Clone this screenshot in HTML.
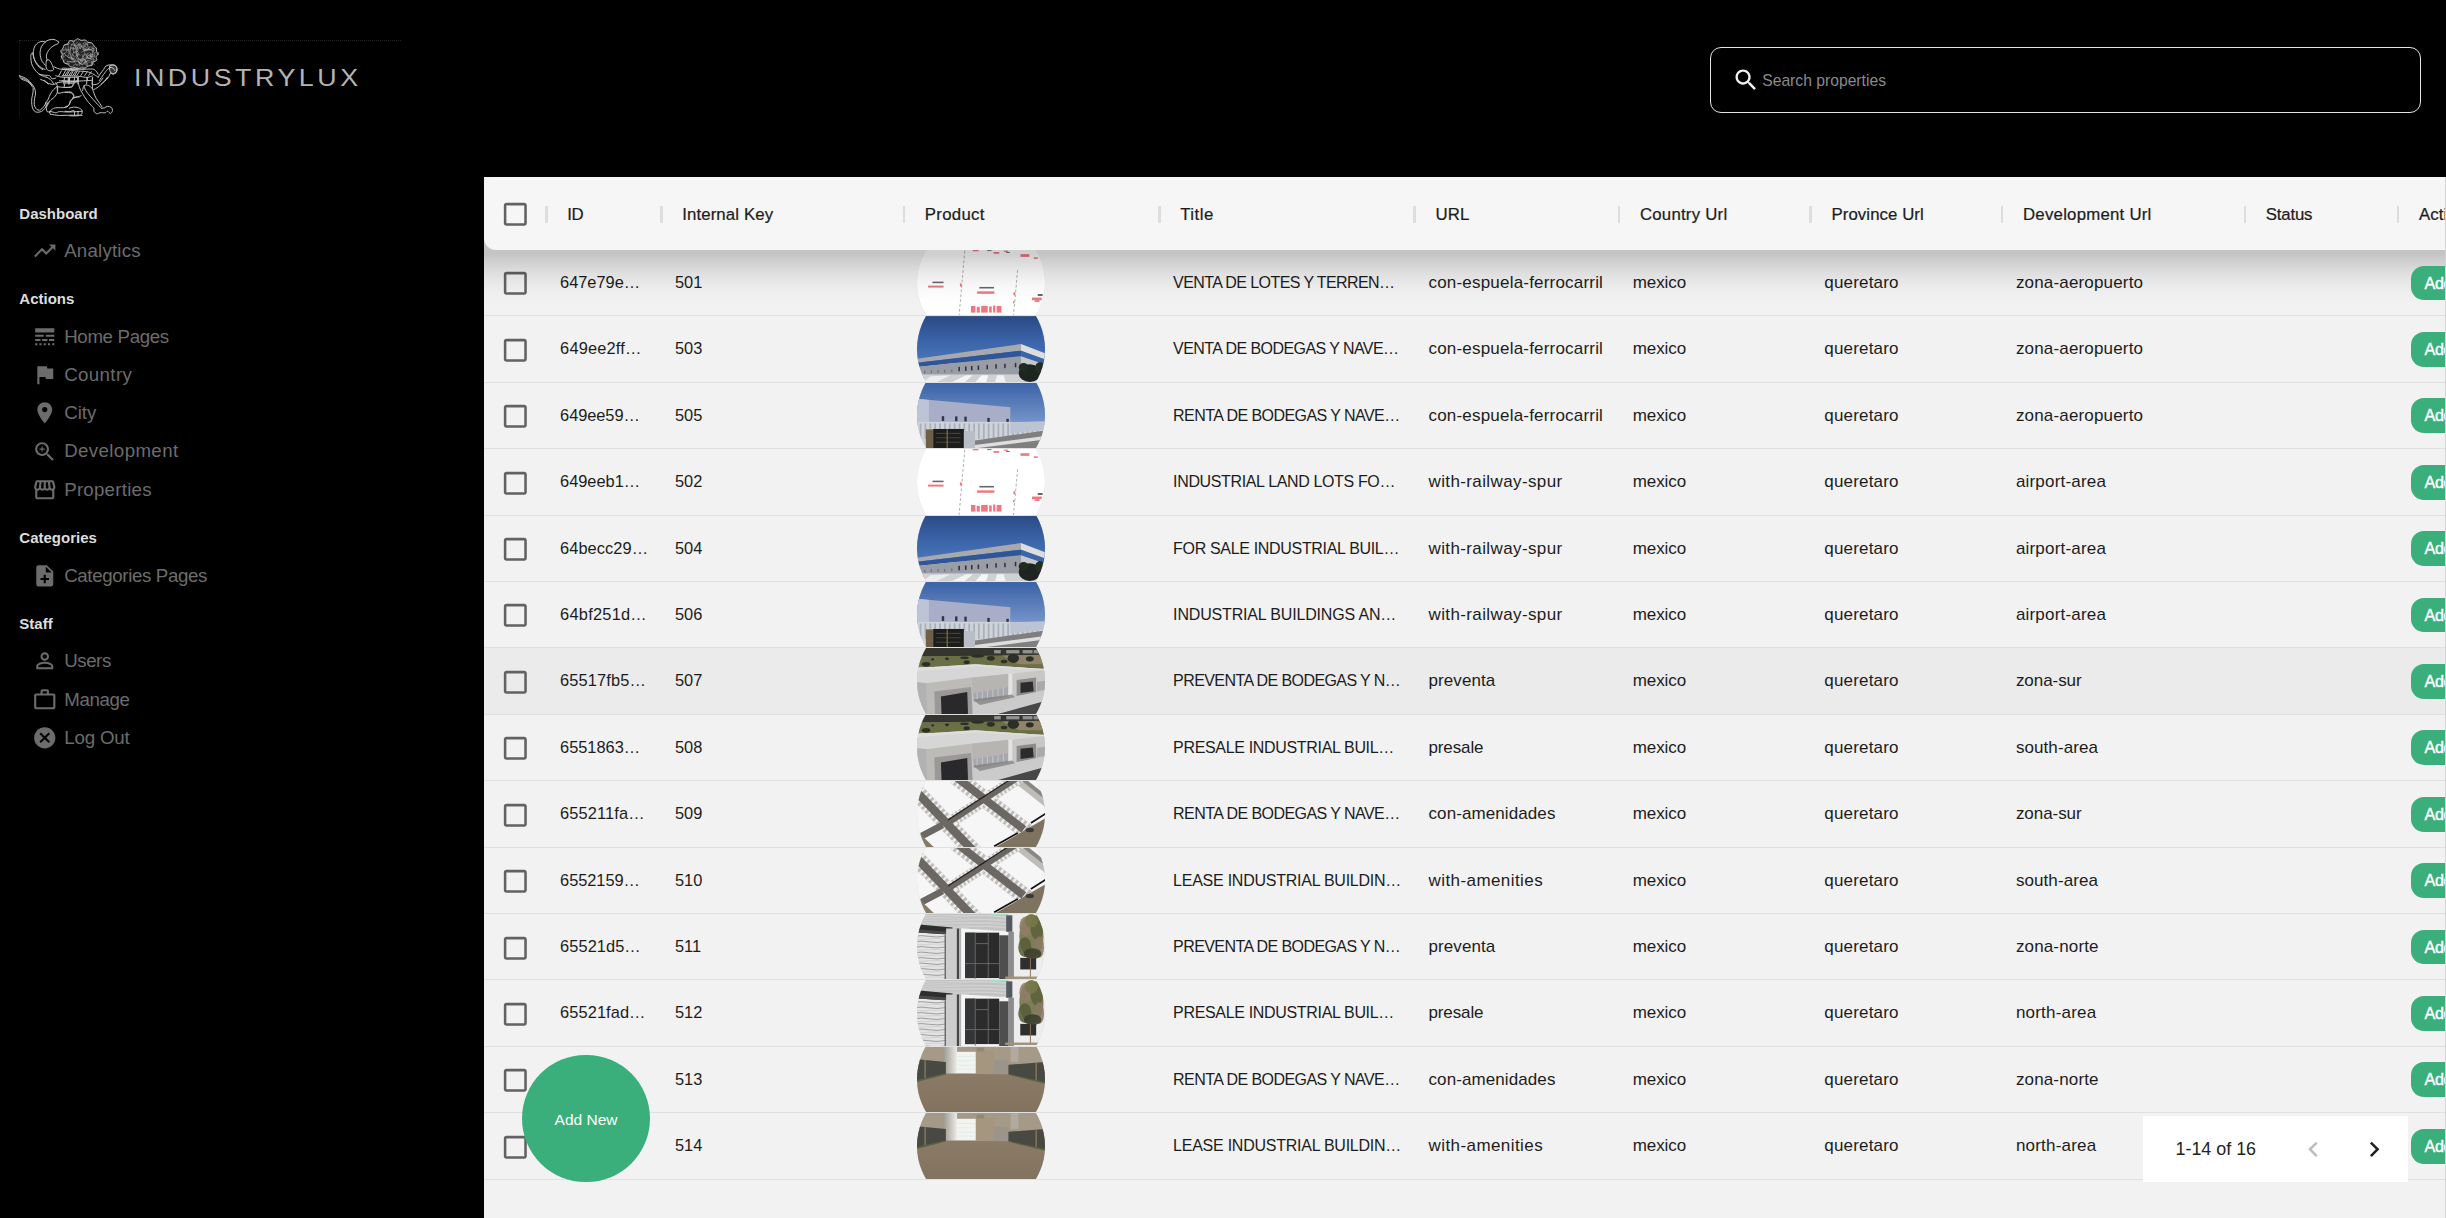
<!DOCTYPE html>
<html lang="en"><head><meta charset="utf-8"><title>IndustryLux Admin - Properties</title>
<style>
html,body{margin:0;padding:0;background:#000;}
body{width:2446px;height:1218px;overflow:hidden;position:relative;font-family:"Liberation Sans",sans-serif;}
.logo{position:absolute;left:19px;top:40px;width:382px;height:77px;}
.logo .bt{position:absolute;left:0;top:0;width:382px;height:0;border-top:1px dotted rgba(255,255,255,.13);}
.logo .bl{position:absolute;left:0;top:0;width:0;height:77px;border-left:1px dotted rgba(255,255,255,.09);}
.lion{position:absolute;left:10px;top:30px;}
.brand{position:absolute;left:134.2px;top:62.6px;font-size:24.4px;line-height:30px;letter-spacing:3.2px;color:#b4b4b4;white-space:nowrap;transform:scaleX(1.1);transform-origin:0 0;}
.search{position:absolute;left:1710px;top:47px;width:708.5px;height:63.9px;border:1.4px solid #e4e4e4;border-radius:11px;}
.search svg{position:absolute;left:20.5px;top:17.5px;fill:#f2f2f2;}
.search span{position:absolute;left:51.2px;top:23.2px;font-size:15.7px;line-height:20px;color:#8a8a8a;white-space:nowrap;}
.sh{position:absolute;left:19.3px;height:24px;line-height:24px;font-size:15px;font-weight:bold;color:#dedede;white-space:nowrap;}
.si{position:absolute;left:32.4px;height:31.2px;display:flex;align-items:center;color:#6c6c6c;font-size:18.7px;white-space:nowrap;}
.si svg{fill:#6c6c6c;margin-right:6.3px;flex:none;}
.grid{position:absolute;left:484px;top:177px;width:1961px;height:1041px;background:#f2f2f2;overflow:hidden;border-right:1px solid #d4d4d4;}
.head{position:absolute;left:0;top:0;width:1980px;height:72.8px;background:#f6f6f6;border-radius:12px 0 0 12px;z-index:3;}
.shade{position:absolute;left:0;top:56px;width:100%;height:74px;z-index:2;background:linear-gradient(rgba(0,0,0,.19) 0,rgba(0,0,0,.19) 21.5px,rgba(0,0,0,.153) 26.7px,rgba(0,0,0,.116) 33.2px,rgba(0,0,0,.083) 39.8px,rgba(0,0,0,.054) 46.4px,rgba(0,0,0,.033) 52.8px,rgba(0,0,0,.017) 59.5px,rgba(0,0,0,.008) 66px,rgba(0,0,0,0) 73px);}
.hc{margin-left:-.6px;position:absolute;top:1.2px;height:100%;display:flex;align-items:center;justify-content:center;}
.cb{fill:#626262;}
.sep{position:absolute;top:28.6px;width:2.6px;height:17.4px;background:#dedede;}
.ht{position:absolute;top:0;line-height:76.4px;font-size:16.8px;color:#1c1c1c;white-space:nowrap;letter-spacing:.12px;-webkit-text-stroke:.22px #1c1c1c;}
.row{position:absolute;left:0;width:1961px;height:66.4px;box-sizing:border-box;border-bottom:1.3px solid #e0e0e0;overflow:hidden;}
.row.hov{background:#ebebeb;}
.c{position:absolute;top:0;line-height:65.2px;margin-left:-.5px;font-size:16.4px;color:#1c1c1c;white-space:nowrap;}
.c.t{font-size:16px;letter-spacing:-.55px;line-height:66.6px;}
.c.l{font-size:17px;letter-spacing:.17px;line-height:66.6px;}
.av{margin-left:-.9px;position:absolute;top:-31.3px;width:127.7px;height:127.7px;border-radius:50%;overflow:hidden;background:#ccc;}
.av svg{display:block;}
.btn{z-index:3;position:absolute;top:15.7px;height:34.8px;width:60px;background:#3aaf7b;border-radius:13px;color:#fff;font-size:16.2px;-webkit-text-stroke:.4px #fff;line-height:35.5px;padding-left:13.4px;letter-spacing:-.4px;box-sizing:border-box;}
.pag{position:absolute;left:2142.9px;top:1116px;width:264.9px;height:65.8px;background:#fff;z-index:6;}
.pag span{position:absolute;left:32.6px;top:0;line-height:67.5px;font-size:17.9px;color:#222;white-space:nowrap;}
.pag svg{position:absolute;top:17.6px;}
.fab{position:absolute;left:522.2px;top:1054.7px;width:127.7px;height:127.7px;border-radius:50%;background:#3aaf7b;color:#fff;z-index:7;text-align:center;line-height:130.4px;font-size:15.5px;}
</style></head>
<body>
<svg width="0" height="0" style="position:absolute"><defs>
<linearGradient id="g-b1" x1="0" y1="0" x2="0" y2="1"><stop offset="0" stop-color="#2b4a85"/><stop offset=".55" stop-color="#3b64a9"/><stop offset="1" stop-color="#4b78ba"/></linearGradient><linearGradient id="g-b2" x1="0" y1="0" x2="0" y2="1"><stop offset="0" stop-color="#3a62a7"/><stop offset="1" stop-color="#7b98cc"/></linearGradient><linearGradient id="g-fl" x1="0" y1="0" x2="0" y2="1"><stop offset="0" stop-color="#8b7b66"/><stop offset="1" stop-color="#7f705c"/></linearGradient><linearGradient id="g-col" x1="0" y1="0" x2="1" y2="0"><stop offset="0" stop-color="#a09a90"/><stop offset="1" stop-color="#ebebe8"/></linearGradient>
</defs></svg>
<div class="logo"><div class="bt"></div><div class="bl"></div></div>
<svg class="lion" width="120" height="95" viewBox="0 0 120 95" fill="none" stroke="#c4c4c4" stroke-width="26" stroke-linecap="round" stroke-linejoin="round"><g transform="translate(8,8) scale(0.03776)"><path d="M1075,105C1056,94 1002,49 960,40C918,31 860,38 820,50C780,62 753,80 720,110C687,140 642,185 620,230C598,275 588,332 585,380C582,428 591,480 600,520C609,560 620,587 640,620C660,653 707,703 720,720M1075,105C1072,112 1081,134 1060,150C1039,166 985,178 950,200C915,222 878,250 850,280C822,310 797,347 780,380C763,413 752,447 750,480C748,513 767,563 770,580M730,105C715,102 672,88 640,90C608,92 572,100 540,120C508,140 472,175 450,210C428,245 418,290 410,330C402,370 395,408 400,450C405,492 420,538 440,580C460,622 490,665 520,700C550,735 587,768 620,790C653,812 703,823 720,830M400,400C392,403 360,400 350,420C340,440 338,477 340,520C342,563 345,630 360,680C375,730 400,777 430,820C460,863 505,910 540,940C575,970 603,983 640,1000C677,1017 740,1033 760,1040M400,400C403,420 408,478 420,520C432,562 447,608 470,650C493,692 528,738 560,770C592,802 643,828 660,840M760,590C775,572 807,572 830,590C853,608 882,658 900,700C918,742 948,812 940,840C932,868 880,873 850,870C820,867 778,848 760,820C742,792 740,738 740,700C740,662 745,608 760,590ZM560,960C583,964 653,978 700,985C747,992 807,984 840,1000C873,1016 873,1070 900,1080C927,1090 983,1063 1000,1060M600,1100C617,1107 667,1120 700,1140C733,1160 783,1205 800,1218M760,1040C777,1050 828,1070 860,1100C892,1130 935,1198 950,1218M950,760C975,770 1042,808 1100,820C1158,832 1218,833 1300,835C1382,837 1541,831 1589,830M1000,1000C1033,1007 1102,1033 1200,1040C1298,1047 1524,1040 1589,1040M1150,870L1080,1000M1255,870L1185,1000M1360,870L1290,1000M1465,870L1395,1000M1570,870L1500,1000M1230,1050L1210,1218M1370,1050L1350,1218M1500,1050L1480,1218M1100,1130C1133,1133 1218,1147 1300,1150C1382,1153 1541,1150 1589,1150"/></g><g transform="translate(56,8) scale(0.03776)"><path d="M-100,800C-67,801 17,800 100,805C183,810 300,827 400,830C500,833 633,814 700,822C767,830 775,857 800,880C825,903 842,947 850,960M-100,835C-33,841 183,861 300,872C417,883 520,882 600,902C680,922 738,967 780,990C822,1013 838,1032 850,1040M40,892L-30,992M145,892L75,992M250,892L180,992M355,892L285,992M460,892L390,992M565,892L495,992M670,892L600,992M-100,1000C-33,1002 190,1005 300,1012C410,1019 493,1043 560,1042C627,1041 677,1011 700,1005M90,1045L75,1218M330,1045L315,1218M560,1045L545,1218M705,1045L690,1218M-100,1130C-33,1132 167,1142 300,1140C433,1138 633,1123 700,1120M850,1040C858,1027 875,995 900,960C925,925 973,867 1000,830C1027,793 1030,760 1060,740C1090,720 1140,712 1180,710C1220,708 1272,715 1300,730C1328,745 1340,772 1345,800C1350,828 1346,875 1330,900C1314,925 1275,945 1250,950C1225,955 1202,913 1180,930C1158,947 1147,1013 1120,1050C1093,1087 1050,1122 1020,1150C990,1178 953,1207 940,1218M880,1130C900,1102 963,1010 1000,960C1037,910 1070,860 1100,830C1130,800 1167,788 1180,780M1180,780C1192,783 1232,787 1250,800C1268,813 1283,850 1290,860"/></g><g transform="translate(8,48) scale(0.03776)"><path d="M40,-59C48,-44 63,8 90,30C117,52 165,53 200,70C235,87 270,103 300,130C330,157 363,208 380,230C397,252 398,232 400,260C402,288 401,353 395,400C389,447 370,490 365,540C360,590 359,652 365,700C371,748 382,797 400,830C418,863 440,888 470,900C500,912 548,907 580,900C612,893 633,883 660,860C687,837 717,797 740,760C763,723 790,660 800,640M100,0C117,7 167,22 200,40C233,58 272,83 300,110C328,137 358,185 370,200M40,-59C58,-52 113,-36 150,-19C187,-2 227,18 260,45C293,72 322,106 350,140C378,174 411,207 430,250C449,293 463,352 465,400C467,448 446,490 440,540C434,590 425,657 430,700C435,743 453,775 470,800C487,825 508,843 530,850C552,857 575,855 600,840C625,825 655,793 680,760C705,727 730,673 750,640C770,607 782,597 800,560C818,523 837,462 860,420C883,378 915,338 940,310C965,282 998,260 1010,250M760,760C775,733 818,640 850,600C882,560 922,548 950,520C978,492 1003,462 1020,430C1037,398 1047,368 1050,330C1053,292 1048,235 1040,200C1032,165 1007,133 1000,120M1040,250C1043,275 1033,378 1060,400C1087,422 1147,385 1200,380C1253,375 1337,363 1380,370C1423,377 1443,395 1460,420C1477,445 1490,490 1480,520C1470,550 1420,570 1400,600C1380,630 1383,670 1360,700C1337,730 1320,765 1260,780C1200,795 1060,782 1000,790C940,798 925,815 900,830C875,845 858,872 850,880M740,650C742,675 745,760 750,800C755,840 753,873 770,890C787,907 837,898 850,900M850,880C875,887 958,918 1000,920C1042,922 1042,893 1100,890C1158,887 1250,902 1350,900C1450,898 1642,883 1700,880M860,960C900,965 1010,988 1100,992C1190,996 1300,985 1400,985C1500,985 1650,989 1700,990M850,880C848,888 838,917 840,930C842,943 857,955 860,960M700,60C717,73 758,122 800,140C842,158 908,173 950,170C992,167 1033,128 1050,120M1050,120C1083,117 1183,102 1250,100C1317,98 1394,117 1450,110C1506,103 1566,68 1589,60M1020,230C1058,233 1183,250 1250,250C1317,250 1385,245 1420,230C1455,215 1453,172 1460,160M1250,110L1220,240M1360,0L1330,110M1480,520C1492,517 1527,502 1550,500C1573,498 1608,504 1620,505"/></g><g transform="translate(56,48) scale(0.03776)"><path d="M320,100C327,127 342,210 360,260C378,310 397,343 430,400C463,457 515,540 560,600C605,660 670,727 700,760C730,793 733,780 740,800C747,820 727,855 740,880C753,905 793,943 820,950C847,957 863,925 900,920C937,915 1007,927 1040,920C1073,913 1077,877 1100,880C1123,883 1158,943 1180,940C1202,937 1227,887 1230,860C1233,833 1222,798 1200,780C1178,762 1130,748 1100,750C1070,752 1045,782 1020,790C995,798 962,798 950,800M480,200C487,222 493,283 520,330C547,377 593,425 640,480C687,535 753,610 800,660C847,710 895,757 920,780C945,803 945,797 950,800M700,280C707,300 723,357 740,400C757,443 773,493 800,540C827,587 875,643 900,680C925,717 942,747 950,760M1100,-20C1083,0 1033,63 1000,100C967,137 942,167 900,200C858,233 783,287 750,300C717,313 725,297 700,280C675,263 637,213 600,200C563,187 507,178 480,200C453,222 447,308 440,330M980,0C958,25 897,120 850,150C803,180 725,175 700,180M-20,380C8,383 113,383 150,400C187,417 193,458 200,480C207,502 157,532 190,530C223,528 365,480 400,470M190,530C177,545 128,588 110,620C92,652 102,697 80,720C58,743 -3,753 -20,760M90,800C108,795 160,772 200,770C240,768 293,777 330,790C367,803 407,822 420,850C433,878 430,935 410,960C390,985 352,993 300,1000C248,1007 133,1000 100,1000M230,880L225,990M320,880L318,985M-20,880C0,882 63,893 100,890C137,887 183,865 200,860M60,0L60,120M-20,130C13,132 127,145 180,140C233,135 280,107 300,100M-20,250C8,248 115,252 150,240C185,228 183,190 190,180M320,100L300,0M560,0L570,60M700,0L700,280"/></g><g transform="translate(56,8) scale(0.03776)"><path d="M849,425C847,450 802,473 796,500C790,528 828,567 815,589C802,612 739,614 718,636C697,659 712,706 690,723C667,741 614,730 583,742C553,755 535,788 505,796C475,804 437,790 403,793C370,795 336,816 304,813C273,810 245,783 213,775C181,767 138,777 112,763C85,749 81,710 55,693C28,675 -26,678 -47,659C-69,640 -62,604 -75,578C-87,553 -119,532 -123,506C-127,481 -95,453 -98,425C-100,397 -140,367 -137,341C-134,315 -92,296 -78,270C-63,245 -72,208 -51,189C-30,169 24,172 49,152C74,132 71,80 99,69C127,57 183,92 217,83C251,75 271,22 302,19C333,15 368,57 403,62C437,68 477,44 506,52C536,60 550,99 580,113C610,126 659,116 685,131C711,146 716,181 735,203C755,226 790,241 803,265C815,289 800,321 808,348C816,374 851,400 849,425Z" fill="#fff" fill-opacity=".13"/><path d="M182,259C177,261 153,260 151,269C150,278 170,306 174,314M233,215C237,220 248,230 257,244C265,257 281,287 286,296M457,140C463,150 481,185 493,196C504,207 520,205 526,207M324,237C319,239 300,253 290,254C280,254 269,242 265,240M533,627C545,629 583,636 601,638C618,640 630,640 636,640M530,285C527,291 517,309 507,322C498,336 480,358 474,365M585,134C581,145 561,181 563,198C564,215 588,231 593,237M90,143C84,148 63,166 52,173C42,179 32,180 28,182M652,459C652,464 643,485 651,490C660,495 695,489 703,489M506,553C505,562 494,588 501,606C508,625 539,656 546,666M-40,323C-51,328 -87,340 -104,350C-120,361 -134,381 -141,387M93,683C84,681 53,670 43,671C32,673 33,688 31,691M387,670C381,675 351,688 348,700C344,711 364,732 368,739M129,620C120,623 95,632 78,635C60,638 33,636 25,636M309,351C304,357 296,381 278,387C260,393 215,386 202,386M137,565C141,563 143,550 159,555C175,561 221,590 233,597M401,563C398,563 379,558 384,566C388,574 420,603 427,610M569,552C580,549 616,534 636,536C656,537 680,557 689,562M351,634C357,643 380,681 385,691C389,700 377,689 376,688M55,477C58,476 64,468 73,471C83,473 105,489 111,493M439,300C450,297 483,282 504,283C525,285 555,305 565,309M285,409C288,422 303,464 301,485C299,506 278,528 274,537M336,639C345,646 371,674 387,684C403,693 425,693 433,695M255,572C250,581 240,614 223,626C205,638 160,641 148,644M513,148C517,148 528,140 539,150C551,160 575,198 582,208M585,458C595,464 636,480 648,493C660,506 656,527 657,534M760,289C751,287 717,277 704,278C691,280 685,297 682,300M421,576C420,585 426,613 418,631C410,650 382,679 374,689M129,165C141,170 187,191 203,196C220,200 224,193 228,192M355,180C362,188 377,218 393,228C409,238 441,238 451,240M628,386C634,392 655,406 661,426C667,446 666,492 667,505M475,524C462,530 417,554 399,560C381,566 371,558 365,557M710,390C710,392 702,388 709,402C716,416 746,461 753,473M705,373C703,387 698,437 696,458C694,478 695,491 695,497M448,281C450,286 450,303 459,312C467,321 493,329 500,333M338,654C346,658 367,668 386,676C404,684 440,699 451,703M-9,257C-6,267 2,298 7,318C12,338 19,367 22,376M295,418C291,426 270,457 272,468C274,478 301,479 307,481M497,640C491,646 467,665 456,677C446,689 439,706 436,712M-13,318C-8,318 2,315 17,320C32,325 67,344 77,349M399,175C401,184 416,208 413,226C409,244 383,274 378,284M116,261C115,271 112,299 111,316C111,334 112,358 112,367M-69,472C-71,478 -66,490 -78,507C-90,523 -129,559 -140,570M-44,299C-52,301 -85,306 -94,311C-103,315 -97,326 -98,329M550,501C561,507 600,533 617,537C634,541 645,527 650,525M566,672C567,681 579,718 574,727C569,736 543,726 536,726M437,764C444,775 476,812 480,827C485,841 467,845 465,849M508,623C505,627 489,637 488,650C487,663 502,691 504,700M344,376C338,382 311,394 308,408C306,422 326,452 330,460M130,247C143,254 189,284 210,288C231,292 249,275 256,273M535,537C542,534 558,519 577,521C596,524 635,546 646,551M-17,584C-26,591 -58,622 -68,628C-78,634 -75,623 -77,622M21,298C27,298 50,298 59,301C67,303 71,311 74,313M739,576C731,588 699,632 691,649C683,667 692,675 692,680M730,559C731,569 737,610 739,622C740,635 741,633 741,635M337,552C333,554 312,554 311,566C310,577 328,611 331,620M544,475C550,478 573,483 580,493C587,503 584,529 585,536M169,425C168,424 162,411 166,419C170,426 188,462 193,471M320,164C331,164 371,156 383,165C395,173 391,205 393,213M477,214C476,223 471,253 471,272C472,292 477,321 479,330M188,100C195,110 219,143 228,160C237,177 241,196 243,203M140,543C141,546 134,561 144,562C154,564 190,555 199,553M349,568C362,572 409,589 428,594C446,599 456,598 462,599M312,596C313,601 309,616 317,627C326,639 356,659 364,665M319,771C309,776 273,802 257,803C241,804 231,783 226,779M259,622C265,622 284,622 297,622C311,622 332,622 339,622M450,665C452,664 449,659 461,659C473,660 511,665 521,666M419,439C423,444 437,459 444,469C451,478 456,490 459,495M356,138C349,144 324,159 312,174C299,190 286,222 281,231M525,412C515,422 476,458 465,471C454,484 460,486 459,489M627,249C617,256 580,279 567,293C554,307 553,327 550,334M-48,416C-55,426 -75,462 -91,473C-107,484 -135,481 -143,483M205,156C204,157 196,159 202,165C209,171 237,186 244,191M674,623C674,633 676,667 673,683C669,700 659,715 656,722M330,426C322,432 300,450 286,461C271,472 249,487 241,492M294,348C286,350 252,352 244,360C237,369 246,393 246,400M329,266C322,273 300,290 285,306C270,321 249,350 241,359M-7,464C-12,465 -23,460 -35,471C-48,482 -73,520 -81,530M489,568C485,567 476,556 467,565C458,574 442,612 437,621M568,493C565,499 560,511 551,526C542,541 520,574 513,584M56,400C60,402 81,402 82,411C83,421 65,451 62,459M778,378C789,383 826,408 841,409C855,409 861,387 865,383M138,482C143,490 153,513 170,526C186,539 226,554 237,559M556,624C554,625 555,628 545,629C535,631 504,633 496,633M636,231C643,233 665,230 680,243C696,257 719,301 727,312M665,431C662,435 647,446 649,458C651,470 671,496 676,504M192,722C204,718 249,699 267,700C285,700 296,719 302,723M689,292C682,292 658,293 646,296C635,300 624,311 619,314M694,423C695,425 692,421 698,434C704,447 724,488 730,499M679,618C683,624 690,636 703,653C716,669 748,705 757,716M163,414C171,427 202,472 211,491C219,511 212,524 212,531M68,177C62,174 50,156 35,159C19,161 -15,188 -24,194M322,189C314,190 285,185 273,197C261,209 254,249 250,260M496,369C495,378 486,409 487,422C489,435 500,442 503,446M578,398C575,403 570,414 564,425C558,435 546,457 543,464M443,549C451,552 475,557 492,569C508,581 532,614 540,623M722,229C719,230 706,224 708,234C709,244 727,280 731,289M282,515C287,522 304,554 312,562C321,570 330,563 334,563M354,197C355,203 355,217 359,232C363,247 376,277 379,286M570,496C565,498 550,506 540,507C531,508 515,503 510,502M489,300C491,304 498,314 506,323C513,332 530,348 535,353M745,332C736,336 701,351 693,355C685,358 697,352 697,352M596,276C594,285 585,318 583,326C580,334 582,325 582,325M542,134C532,131 495,115 484,116C472,117 474,136 472,140M-6,384C-13,388 -33,406 -50,410C-68,413 -102,405 -112,404M39,495C45,500 60,525 79,527C97,529 139,512 150,509M206,270C213,275 236,291 247,296C258,301 267,298 271,298M444,486C443,491 435,501 434,517C433,533 436,571 437,582M319,404C327,411 363,436 372,447C380,459 370,470 369,474M582,262C591,268 627,290 635,298C644,306 634,307 633,309M453,532C465,542 509,565 523,595C536,625 534,691 536,710M383,592C379,604 378,639 358,663C338,688 280,725 265,737M281,602C264,607 219,627 178,630C137,632 59,619 35,617M195,557C174,549 107,534 67,509C27,485 -26,425 -44,408M165,479C150,459 94,405 76,359C59,314 65,232 63,207M205,403C205,378 185,298 202,249C219,200 289,131 306,107M297,366C311,343 340,265 386,231C432,196 542,169 573,157M397,384C421,372 484,321 541,313C597,304 705,328 738,332M458,450C481,451 551,440 595,456C639,473 702,535 723,550M520,330C533,325 570,300 600,300C630,300 673,310 700,330C727,350 753,388 760,420C767,452 757,493 740,520C723,547 690,567 660,580C630,593 577,597 560,600M430,250C442,247 478,228 500,230C522,232 550,255 560,260M600,420C608,425 633,447 650,450C667,453 692,442 700,440M380,150C367,168 317,218 300,260C283,302 275,353 280,400C285,447 307,500 330,540C353,580 405,623 420,640M200,120C187,142 135,200 120,250C105,300 102,368 110,420C118,472 145,517 170,560C195,603 245,660 260,680" stroke-opacity=".55" stroke-width="22"/><path d="M1160,740C1180,710 1258,710 1290,720C1322,730 1342,768 1350,800C1358,832 1353,884 1335,910C1317,936 1268,957 1240,955C1212,953 1183,936 1170,900C1157,864 1140,770 1160,740Z" fill="#fff" fill-opacity=".22"/></g></svg>
<div class="brand">INDUSTRYLUX</div>
<div class="search"><svg width="28" height="28" viewBox="0 0 24 24"><path d="M15.5 14h-.79l-.28-.27C15.41 12.59 16 11.11 16 9.5 16 5.91 13.09 3 9.5 3S3 5.91 3 9.5 5.91 16 9.5 16c1.61 0 3.09-.59 4.23-1.57l.27.28v.79l5 4.99L20.49 19l-4.99-5zm-6 0C7.01 14 5 11.99 5 9.5S7.01 5 9.5 5 14 7.01 14 9.5 11.99 14 9.5 14z"/></svg><span>Search properties</span></div>
<div class="sh" style="top:201.5px">Dashboard</div>
<div class="sh" style="top:287.0px">Actions</div>
<div class="sh" style="top:526.0px">Categories</div>
<div class="sh" style="top:611.5px">Staff</div>
<div class="si" style="top:235.0px"><svg class="" style="" width="25.5" height="25.5" viewBox="0 0 24 24"><path d="M16 6l2.29 2.29-4.88 4.88-4-4L2 16.59 3.41 18l6-6 4 4 6.3-6.29L22 12V6z"/></svg><span style="letter-spacing:0.2px">Analytics</span></div>
<div class="si" style="top:321.0px"><svg class="" style="" width="25.5" height="25.5" viewBox="0 0 24 24"><path d="M3 16h5v-2H3v2zm6.5 0h5v-2h-5v2zm6.5 0h5v-2h-5v2zM3 20h2v-2H3v2zm4 0h2v-2H7v2zm4 0h2v-2h-2v2zm4 0h2v-2h-2v2zm4 0h2v-2h-2v2zM3 12h8v-2H3v2zm10 0h8v-2h-8v2zM3 4v4h18V4H3z"/></svg><span style="letter-spacing:-0.34px">Home Pages</span></div>
<div class="si" style="top:359.3px"><svg class="" style="" width="25.5" height="25.5" viewBox="0 0 24 24"><path d="M14.4 6L14 4H5v17h2v-7h5.6l.4 2h7V6z"/></svg><span style="letter-spacing:0.37px">Country</span></div>
<div class="si" style="top:397.6px"><svg class="" style="" width="25.5" height="25.5" viewBox="0 0 24 24"><path d="M12 2C8.13 2 5 5.13 5 9c0 5.25 7 13 7 13s7-7.75 7-13c0-3.87-3.13-7-7-7zm0 9.5c-1.38 0-2.5-1.12-2.5-2.5s1.12-2.5 2.5-2.5 2.5 1.12 2.5 2.5-1.12 2.5-2.5 2.5z"/></svg><span style="letter-spacing:0px">City</span></div>
<div class="si" style="top:435.9px"><svg class="" style="" width="25.5" height="25.5" viewBox="0 0 24 24"><path d="M15.5 14h-.79l-.28-.27C15.41 12.59 16 11.11 16 9.5 16 5.91 13.09 3 9.5 3S3 5.91 3 9.5 5.91 16 9.5 16c1.61 0 3.09-.59 4.23-1.57l.27.28v.79l5 4.99L20.49 19l-4.99-5zm-6 0C7.01 14 5 11.99 5 9.5S7.01 5 9.5 5 14 7.01 14 9.5 11.99 14 9.5 14zM12 10h-2v2H9v-2H7V9h2V7h1v2h2v1z"/></svg><span style="letter-spacing:0.38px">Development</span></div>
<div class="si" style="top:474.2px"><svg class="" style="" width="25.5" height="25.5" viewBox="0 0 24 24"><path d="M21.9 8.89l-1.05-4.37c-.22-.9-1-1.52-1.91-1.52H5.05c-.9 0-1.69.63-1.9 1.52L2.1 8.89c-.24 1.02-.02 2.06.62 2.88.08.11.19.19.28.29V19c0 1.1.9 2 2 2h14c1.1 0 2-.9 2-2v-6.94c.09-.09.2-.18.28-.28.64-.82.87-1.87.62-2.89zm-2.99-3.9l1.05 4.37c.1.42.01.84-.25 1.17-.14.18-.44.47-.94.47-.61 0-1.14-.49-1.21-1.14L16.98 5l1.93-.01zM13 5h1.96l.54 4.52c.05.39-.07.78-.33 1.07-.22.26-.54.41-.95.41-.67 0-1.22-.59-1.22-1.31V5zM8.49 9.52L9.04 5H11v4.69c0 .72-.55 1.31-1.29 1.31-.34 0-.65-.15-.89-.41-.25-.29-.37-.68-.33-1.07zm-4.45-.16L5.05 5h1.97l-.58 4.86c-.08.65-.6 1.14-1.21 1.14-.49 0-.8-.29-.93-.47-.27-.32-.36-.75-.26-1.17zM5 19v-6.03c.08.01.15.03.23.03.87 0 1.66-.36 2.24-.95.6.6 1.4.95 2.31.95.87 0 1.65-.36 2.23-.93.59.57 1.39.93 2.29.93.84 0 1.64-.35 2.24-.95.58.59 1.37.95 2.24.95.08 0 .15-.02.23-.03V19H5z"/></svg><span style="letter-spacing:0.24px">Properties</span></div>
<div class="si" style="top:560.0px"><svg class="" style="" width="25.5" height="25.5" viewBox="0 0 24 24"><path d="M14 2H6c-1.1 0-1.99.9-1.99 2L4 20c0 1.1.89 2 1.99 2H18c1.1 0 2-.9 2-2V8l-6-6zm2 14h-3v3h-2v-3H8v-2h3v-3h2v3h3v2zm-3-7V3.5L18.5 9H13z"/></svg><span style="letter-spacing:-0.36px">Categories Pages</span></div>
<div class="si" style="top:645.5px"><svg class="" style="" width="25.5" height="25.5" viewBox="0 0 24 24"><path d="M12 5.9c1.16 0 2.1.94 2.1 2.1s-.94 2.1-2.1 2.1S9.9 9.16 9.9 8s.94-2.1 2.1-2.1m0 9c2.97 0 6.1 1.46 6.1 2.1v1.1H5.9V17c0-.64 3.13-2.1 6.1-2.1M12 4C9.79 4 8 5.79 8 8s1.79 4 4 4 4-1.79 4-4-1.79-4-4-4zm0 9c-2.67 0-8 1.34-8 4v3h16v-3c0-2.66-5.33-4-8-4z"/></svg><span style="letter-spacing:-0.44px">Users</span></div>
<div class="si" style="top:684.0px"><svg class="" style="" width="25.5" height="25.5" viewBox="0 0 24 24"><path d="M14 6V4h-4v2h4zM4 8v11h16V8H4zm16-2c1.11 0 2 .89 2 2v11c0 1.11-.89 2-2 2H4c-1.11 0-2-.89-2-2l.01-11c0-1.11.88-2 1.99-2h4V4c0-1.11.89-2 2-2h4c1.11 0 2 .89 2 2v2h4z"/></svg><span style="letter-spacing:-0.35px">Manage</span></div>
<div class="si" style="top:722.0px"><svg class="" style="" width="25.5" height="25.5" viewBox="0 0 24 24"><path d="M12 2C6.47 2 2 6.47 2 12s4.47 10 10 10 10-4.47 10-10S17.53 2 12 2zm5 13.59L15.59 17 12 13.41 8.41 17 7 15.59 10.59 12 7 8.41 8.41 7 12 10.59 15.59 7 17 8.41 13.41 12 17 15.59z"/></svg><span style="letter-spacing:-0.16px">Log Out</span></div>
<div class="grid">
<div class="shade"></div>
<div class="head">
<div class="hc" style="left:0.0px;width:63.8px"><svg class="cb" style="" width="30.65" height="30.65" viewBox="0 0 24 24"><path d="M19 5v14H5V5h14m0-2H5c-1.1 0-2 .9-2 2v14c0 1.1.9 2 2 2h14c1.1 0 2-.9 2-2V5c0-1.1-.9-2-2-2z"/></svg></div>
<div class="sep" style="left:61.1px"></div><div class="ht" style="left:83.3px;letter-spacing:-0.4px">ID</div>
<div class="sep" style="left:176.0px"></div><div class="ht" style="left:198.2px;letter-spacing:0.12px">Internal Key</div>
<div class="sep" style="left:418.6px"></div><div class="ht" style="left:440.8px;letter-spacing:0.29px">Product</div>
<div class="sep" style="left:674.0px"></div><div class="ht" style="left:696.2px;letter-spacing:0.5px">Title</div>
<div class="sep" style="left:929.4px"></div><div class="ht" style="left:951.6px;letter-spacing:0.12px">URL</div>
<div class="sep" style="left:1133.7px"></div><div class="ht" style="left:1155.9px;letter-spacing:0.24px">Country Url</div>
<div class="sep" style="left:1325.3px"></div><div class="ht" style="left:1347.5px;letter-spacing:0.08px">Province Url</div>
<div class="sep" style="left:1516.8px"></div><div class="ht" style="left:1539.0px;letter-spacing:0.24px">Development Url</div>
<div class="sep" style="left:1759.5px"></div><div class="ht" style="left:1781.7px;letter-spacing:-0.16px">Status</div>
<div class="sep" style="left:1912.7px"></div><div class="ht" style="left:1934.9px;letter-spacing:0.12px">Actions</div>
</div>
<div class="row" style="top:72.90px"><div class="hc" style="left:0;width:63.8px"><svg class="cb" style="" width="30.65" height="30.65" viewBox="0 0 24 24"><path d="M19 5v14H5V5h14m0-2H5c-1.1 0-2 .9-2 2v14c0 1.1.9 2 2 2h14c1.1 0 2-.9 2-2V5c0-1.1-.9-2-2-2z"/></svg></div><div class="c " style="left:76.6px;letter-spacing:-0.025px">647e79e…</div><div class="c " style="left:191.5px">501</div><div class="av" style="left:434.2px"><svg width="127.7" height="127.7" viewBox="0 0 128 128"><g transform="translate(-17.29,31.30) scale(0.2217)"><rect x="0" y="-200" width="800" height="700" fill="#fff" /><path d="M296,-20L268,300M533,90L514,300" stroke="#9a9a9a" stroke-width="3.5" stroke-dasharray="13 9" fill="none"/><rect x="128" y="160" width="70" height="9" fill="#ea5560" opacity=".8"/><rect x="350" y="186" width="78" height="11" fill="#ea5560" opacity=".8"/><rect x="322" y="252" width="20" height="30" fill="#ea5560" opacity=".8"/><rect x="348" y="256" width="14" height="26" fill="#ea5560" opacity=".8"/><rect x="368" y="252" width="30" height="30" fill="#ea5560" opacity=".8"/><rect x="404" y="254" width="12" height="28" fill="#ea5560" opacity=".8"/><rect x="422" y="250" width="10" height="32" fill="#ea5560" opacity=".8"/><rect x="438" y="252" width="22" height="30" fill="#ea5560" opacity=".8"/><rect x="598" y="214" width="44" height="12" fill="#ea5560" opacity=".8"/><rect x="610" y="226" width="22" height="8" fill="#ea5560" opacity=".8"/><rect x="330" y="-2" width="26" height="7" fill="#ea5560" opacity=".8"/><rect x="424" y="8" width="26" height="8" fill="#ea5560" opacity=".8"/><rect x="546" y="18" width="40" height="12" fill="#ea5560" opacity=".8"/><rect x="606" y="32" width="18" height="7" fill="#ea5560" opacity=".8"/><rect x="272" y="150" width="8" height="14" fill="#ea5560" opacity=".8"/><rect x="514" y="190" width="8" height="14" fill="#ea5560" opacity=".8"/><rect x="512" y="230" width="6" height="10" fill="#ea5560" opacity=".8"/><rect x="470" y="2" width="20" height="5" fill="#ea5560" opacity=".8"/><rect x="148" y="142" width="50" height="7" fill="#333" opacity=".75"/><rect x="360" y="166" width="66" height="7" fill="#333" opacity=".75"/><rect x="624" y="198" width="22" height="9" fill="#333" opacity=".75"/><rect x="395" y="0" width="20" height="4" fill="#333" opacity=".75"/><rect x="480" y="8" width="18" height="4" fill="#333" opacity=".75"/></g></svg></div><div class="c t" style="left:689.6px;letter-spacing:-0.58px">VENTA DE LOTES Y TERREN…</div><div class="c l" style="left:945.0px;letter-spacing:0.197px">con-espuela-ferrocarril</div><div class="c l" style="left:1149.3px;letter-spacing:-0.11px">mexico</div><div class="c l" style="left:1340.8px;letter-spacing:0.18px">queretaro</div><div class="c l" style="left:1532.4px;letter-spacing:0.169px">zona-aeropuerto</div><div class="btn" style="left:1927.2px">Add</div></div>
<div class="row" style="top:139.30px"><div class="hc" style="left:0;width:63.8px"><svg class="cb" style="" width="30.65" height="30.65" viewBox="0 0 24 24"><path d="M19 5v14H5V5h14m0-2H5c-1.1 0-2 .9-2 2v14c0 1.1.9 2 2 2h14c1.1 0 2-.9 2-2V5c0-1.1-.9-2-2-2z"/></svg></div><div class="c " style="left:76.6px;letter-spacing:0.177px">649ee2ff…</div><div class="c " style="left:191.5px">503</div><div class="av" style="left:434.2px"><svg width="127.7" height="127.7" viewBox="0 0 128 128"><g transform="translate(-17.29,-35.00) scale(0.2217)"><rect x="0" y="299" width="800" height="210" fill="url(#g-b1)" /><rect x="0" y="100" width="800" height="200" fill="#2b4a85" /><polygon points="60,494 548,425 548,455 60,512" fill="#a7a9ae" /><polygon points="60,512 548,455 548,480 60,530" fill="#2f5699" /><polygon points="60,530 548,480 548,566 60,580" fill="#9a9da5" /><polygon points="548,425 670,472 670,500 548,455" fill="#dcdddf" /><polygon points="548,455 670,500 670,522 548,480" fill="#3b65aa" /><polygon points="548,480 670,522 670,600 548,566" fill="#c6c7ca" /><rect x="265" y="528" width="7" height="20" fill="#2f323c" /><rect x="295" y="526" width="7" height="20" fill="#2f323c" /><rect x="322" y="524" width="7" height="20" fill="#2f323c" /><rect x="352" y="522" width="7" height="20" fill="#2f323c" /><rect x="392" y="519" width="7" height="20" fill="#2f323c" /><rect x="432" y="516" width="7" height="20" fill="#2f323c" /><rect x="472" y="514" width="7" height="20" fill="#2f323c" /><rect x="520" y="510" width="7" height="20" fill="#2f323c" /><rect x="110" y="546" width="6" height="12" fill="#70757f" /><rect x="140" y="544" width="6" height="12" fill="#70757f" /><rect x="170" y="543" width="6" height="12" fill="#70757f" /><rect x="200" y="542" width="6" height="12" fill="#70757f" /><rect x="232" y="540" width="6" height="12" fill="#70757f" /><rect x="0" y="562" width="800" height="120" fill="#cfd0d2" /><polygon points="230,600 300,566 330,566 290,600" fill="#f4f4f4" /><polygon points="340,600 370,566 400,566 390,600" fill="#f6f6f6" /><polygon points="430,600 440,566 470,566 480,600" fill="#f2f2f2" /><polygon points="100,600 140,570 230,566 160,600" fill="#ededed" /><ellipse cx="588" cy="556" rx="50" ry="40" fill="#1e2420"/><ellipse cx="634" cy="532" rx="22" ry="26" fill="#252c24"/><ellipse cx="560" cy="530" rx="22" ry="20" fill="#232a22"/></g></svg></div><div class="c t" style="left:689.6px;letter-spacing:-0.562px">VENTA DE BODEGAS Y NAVE…</div><div class="c l" style="left:945.0px;letter-spacing:0.197px">con-espuela-ferrocarril</div><div class="c l" style="left:1149.3px;letter-spacing:-0.11px">mexico</div><div class="c l" style="left:1340.8px;letter-spacing:0.18px">queretaro</div><div class="c l" style="left:1532.4px;letter-spacing:0.169px">zona-aeropuerto</div><div class="btn" style="left:1927.2px">Add</div></div>
<div class="row" style="top:205.71px"><div class="hc" style="left:0;width:63.8px"><svg class="cb" style="" width="30.65" height="30.65" viewBox="0 0 24 24"><path d="M19 5v14H5V5h14m0-2H5c-1.1 0-2 .9-2 2v14c0 1.1.9 2 2 2h14c1.1 0 2-.9 2-2V5c0-1.1-.9-2-2-2z"/></svg></div><div class="c " style="left:76.6px;letter-spacing:-0.063px">649ee59…</div><div class="c " style="left:191.5px">505</div><div class="av" style="left:434.2px"><svg width="127.7" height="127.7" viewBox="0 0 128 128"><g transform="translate(-17.29,-101.41) scale(0.2217)"><rect x="0" y="598" width="800" height="200" fill="url(#g-b2)" /><rect x="0" y="400" width="800" height="199" fill="#3a62a7" /><polygon points="60,672 500,712 500,805 60,805" fill="#a9aec8" /><polygon points="60,672 132,679 132,805 60,805" fill="#bfc3d6" /><rect x="190" y="752" width="11" height="22" fill="#333846" /><rect x="250" y="753" width="11" height="22" fill="#333846" /><rect x="292" y="754" width="11" height="22" fill="#333846" /><rect x="396" y="760" width="11" height="22" fill="#333846" /><rect x="482" y="764" width="11" height="22" fill="#333846" /><rect x="0" y="778" width="800" height="200" fill="#cfd3da" /><rect x="90" y="785" width="8" height="70" fill="#9ea3ae" opacity=".75"/><rect x="112" y="785" width="8" height="70" fill="#9ea3ae" opacity=".75"/><rect x="134" y="785" width="8" height="70" fill="#9ea3ae" opacity=".75"/><rect x="156" y="785" width="8" height="70" fill="#9ea3ae" opacity=".75"/><rect x="178" y="785" width="8" height="70" fill="#9ea3ae" opacity=".75"/><rect x="200" y="785" width="8" height="70" fill="#9ea3ae" opacity=".75"/><rect x="222" y="785" width="8" height="70" fill="#9ea3ae" opacity=".75"/><rect x="244" y="785" width="8" height="70" fill="#9ea3ae" opacity=".75"/><rect x="266" y="785" width="8" height="70" fill="#9ea3ae" opacity=".75"/><rect x="288" y="785" width="8" height="70" fill="#9ea3ae" opacity=".75"/><rect x="310" y="785" width="8" height="70" fill="#9ea3ae" opacity=".75"/><rect x="332" y="785" width="8" height="70" fill="#9ea3ae" opacity=".75"/><rect x="354" y="785" width="8" height="70" fill="#9ea3ae" opacity=".75"/><rect x="376" y="785" width="8" height="70" fill="#9ea3ae" opacity=".75"/><rect x="398" y="785" width="8" height="70" fill="#9ea3ae" opacity=".75"/><rect x="420" y="785" width="8" height="70" fill="#9ea3ae" opacity=".75"/><rect x="442" y="785" width="8" height="70" fill="#9ea3ae" opacity=".75"/><rect x="464" y="785" width="8" height="70" fill="#9ea3ae" opacity=".75"/><rect x="486" y="785" width="8" height="70" fill="#9ea3ae" opacity=".75"/><rect x="508" y="785" width="8" height="70" fill="#9ea3ae" opacity=".75"/><rect x="530" y="785" width="8" height="70" fill="#9ea3ae" opacity=".75"/><rect x="552" y="785" width="8" height="70" fill="#9ea3ae" opacity=".75"/><rect x="574" y="785" width="8" height="70" fill="#9ea3ae" opacity=".75"/><rect x="596" y="785" width="8" height="70" fill="#9ea3ae" opacity=".75"/><rect x="618" y="785" width="8" height="70" fill="#9ea3ae" opacity=".75"/><polygon points="500,780 670,775 670,812 500,830" fill="#bcc4d3" /><polygon points="340,862 670,815 670,960 340,960" fill="#7f7f7f" /><polygon points="340,882 670,840 670,856 340,898" fill="#dedede" /><rect x="150" y="810" width="140" height="110" fill="#1d1d1b" /><rect x="118" y="812" width="34" height="100" fill="#6e6048" /><path d="M165,830h110M165,850h110M165,870h110" stroke="#4a4a4a" stroke-width="4"/><rect x="212" y="812" width="5" height="100" fill="#8a7a40" /><rect x="290" y="820" width="50" height="90" fill="#b9bdc6" /></g></svg></div><div class="c t" style="left:689.6px;letter-spacing:-0.553px">RENTA DE BODEGAS Y NAVE…</div><div class="c l" style="left:945.0px;letter-spacing:0.197px">con-espuela-ferrocarril</div><div class="c l" style="left:1149.3px;letter-spacing:-0.11px">mexico</div><div class="c l" style="left:1340.8px;letter-spacing:0.18px">queretaro</div><div class="c l" style="left:1532.4px;letter-spacing:0.169px">zona-aeropuerto</div><div class="btn" style="left:1927.2px">Add</div></div>
<div class="row" style="top:272.11px"><div class="hc" style="left:0;width:63.8px"><svg class="cb" style="" width="30.65" height="30.65" viewBox="0 0 24 24"><path d="M19 5v14H5V5h14m0-2H5c-1.1 0-2 .9-2 2v14c0 1.1.9 2 2 2h14c1.1 0 2-.9 2-2V5c0-1.1-.9-2-2-2z"/></svg></div><div class="c " style="left:76.6px;letter-spacing:-0.025px">649eeb1…</div><div class="c " style="left:191.5px">502</div><div class="av" style="left:434.2px"><svg width="127.7" height="127.7" viewBox="0 0 128 128"><g transform="translate(-17.29,31.30) scale(0.2217)"><rect x="0" y="-200" width="800" height="700" fill="#fff" /><path d="M296,-20L268,300M533,90L514,300" stroke="#9a9a9a" stroke-width="3.5" stroke-dasharray="13 9" fill="none"/><rect x="128" y="160" width="70" height="9" fill="#ea5560" opacity=".8"/><rect x="350" y="186" width="78" height="11" fill="#ea5560" opacity=".8"/><rect x="322" y="252" width="20" height="30" fill="#ea5560" opacity=".8"/><rect x="348" y="256" width="14" height="26" fill="#ea5560" opacity=".8"/><rect x="368" y="252" width="30" height="30" fill="#ea5560" opacity=".8"/><rect x="404" y="254" width="12" height="28" fill="#ea5560" opacity=".8"/><rect x="422" y="250" width="10" height="32" fill="#ea5560" opacity=".8"/><rect x="438" y="252" width="22" height="30" fill="#ea5560" opacity=".8"/><rect x="598" y="214" width="44" height="12" fill="#ea5560" opacity=".8"/><rect x="610" y="226" width="22" height="8" fill="#ea5560" opacity=".8"/><rect x="330" y="-2" width="26" height="7" fill="#ea5560" opacity=".8"/><rect x="424" y="8" width="26" height="8" fill="#ea5560" opacity=".8"/><rect x="546" y="18" width="40" height="12" fill="#ea5560" opacity=".8"/><rect x="606" y="32" width="18" height="7" fill="#ea5560" opacity=".8"/><rect x="272" y="150" width="8" height="14" fill="#ea5560" opacity=".8"/><rect x="514" y="190" width="8" height="14" fill="#ea5560" opacity=".8"/><rect x="512" y="230" width="6" height="10" fill="#ea5560" opacity=".8"/><rect x="470" y="2" width="20" height="5" fill="#ea5560" opacity=".8"/><rect x="148" y="142" width="50" height="7" fill="#333" opacity=".75"/><rect x="360" y="166" width="66" height="7" fill="#333" opacity=".75"/><rect x="624" y="198" width="22" height="9" fill="#333" opacity=".75"/><rect x="395" y="0" width="20" height="4" fill="#333" opacity=".75"/><rect x="480" y="8" width="18" height="4" fill="#333" opacity=".75"/></g></svg></div><div class="c t" style="left:689.6px;letter-spacing:-0.357px">INDUSTRIAL LAND LOTS FO…</div><div class="c l" style="left:945.0px;letter-spacing:0.386px">with-railway-spur</div><div class="c l" style="left:1149.3px;letter-spacing:-0.11px">mexico</div><div class="c l" style="left:1340.8px;letter-spacing:0.18px">queretaro</div><div class="c l" style="left:1532.4px;letter-spacing:0.194px">airport-area</div><div class="btn" style="left:1927.2px">Add</div></div>
<div class="row" style="top:338.52px"><div class="hc" style="left:0;width:63.8px"><svg class="cb" style="" width="30.65" height="30.65" viewBox="0 0 24 24"><path d="M19 5v14H5V5h14m0-2H5c-1.1 0-2 .9-2 2v14c0 1.1.9 2 2 2h14c1.1 0 2-.9 2-2V5c0-1.1-.9-2-2-2z"/></svg></div><div class="c " style="left:76.6px;letter-spacing:0.057px">64becc29…</div><div class="c " style="left:191.5px">504</div><div class="av" style="left:434.2px"><svg width="127.7" height="127.7" viewBox="0 0 128 128"><g transform="translate(-17.29,-35.00) scale(0.2217)"><rect x="0" y="299" width="800" height="210" fill="url(#g-b1)" /><rect x="0" y="100" width="800" height="200" fill="#2b4a85" /><polygon points="60,494 548,425 548,455 60,512" fill="#a7a9ae" /><polygon points="60,512 548,455 548,480 60,530" fill="#2f5699" /><polygon points="60,530 548,480 548,566 60,580" fill="#9a9da5" /><polygon points="548,425 670,472 670,500 548,455" fill="#dcdddf" /><polygon points="548,455 670,500 670,522 548,480" fill="#3b65aa" /><polygon points="548,480 670,522 670,600 548,566" fill="#c6c7ca" /><rect x="265" y="528" width="7" height="20" fill="#2f323c" /><rect x="295" y="526" width="7" height="20" fill="#2f323c" /><rect x="322" y="524" width="7" height="20" fill="#2f323c" /><rect x="352" y="522" width="7" height="20" fill="#2f323c" /><rect x="392" y="519" width="7" height="20" fill="#2f323c" /><rect x="432" y="516" width="7" height="20" fill="#2f323c" /><rect x="472" y="514" width="7" height="20" fill="#2f323c" /><rect x="520" y="510" width="7" height="20" fill="#2f323c" /><rect x="110" y="546" width="6" height="12" fill="#70757f" /><rect x="140" y="544" width="6" height="12" fill="#70757f" /><rect x="170" y="543" width="6" height="12" fill="#70757f" /><rect x="200" y="542" width="6" height="12" fill="#70757f" /><rect x="232" y="540" width="6" height="12" fill="#70757f" /><rect x="0" y="562" width="800" height="120" fill="#cfd0d2" /><polygon points="230,600 300,566 330,566 290,600" fill="#f4f4f4" /><polygon points="340,600 370,566 400,566 390,600" fill="#f6f6f6" /><polygon points="430,600 440,566 470,566 480,600" fill="#f2f2f2" /><polygon points="100,600 140,570 230,566 160,600" fill="#ededed" /><ellipse cx="588" cy="556" rx="50" ry="40" fill="#1e2420"/><ellipse cx="634" cy="532" rx="22" ry="26" fill="#252c24"/><ellipse cx="560" cy="530" rx="22" ry="20" fill="#232a22"/></g></svg></div><div class="c t" style="left:689.6px;letter-spacing:-0.325px">FOR SALE INDUSTRIAL BUIL…</div><div class="c l" style="left:945.0px;letter-spacing:0.386px">with-railway-spur</div><div class="c l" style="left:1149.3px;letter-spacing:-0.11px">mexico</div><div class="c l" style="left:1340.8px;letter-spacing:0.18px">queretaro</div><div class="c l" style="left:1532.4px;letter-spacing:0.194px">airport-area</div><div class="btn" style="left:1927.2px">Add</div></div>
<div class="row" style="top:404.92px"><div class="hc" style="left:0;width:63.8px"><svg class="cb" style="" width="30.65" height="30.65" viewBox="0 0 24 24"><path d="M19 5v14H5V5h14m0-2H5c-1.1 0-2 .9-2 2v14c0 1.1.9 2 2 2h14c1.1 0 2-.9 2-2V5c0-1.1-.9-2-2-2z"/></svg></div><div class="c " style="left:76.6px;letter-spacing:0.237px">64bf251d…</div><div class="c " style="left:191.5px">506</div><div class="av" style="left:434.2px"><svg width="127.7" height="127.7" viewBox="0 0 128 128"><g transform="translate(-17.29,-101.41) scale(0.2217)"><rect x="0" y="598" width="800" height="200" fill="url(#g-b2)" /><rect x="0" y="400" width="800" height="199" fill="#3a62a7" /><polygon points="60,672 500,712 500,805 60,805" fill="#a9aec8" /><polygon points="60,672 132,679 132,805 60,805" fill="#bfc3d6" /><rect x="190" y="752" width="11" height="22" fill="#333846" /><rect x="250" y="753" width="11" height="22" fill="#333846" /><rect x="292" y="754" width="11" height="22" fill="#333846" /><rect x="396" y="760" width="11" height="22" fill="#333846" /><rect x="482" y="764" width="11" height="22" fill="#333846" /><rect x="0" y="778" width="800" height="200" fill="#cfd3da" /><rect x="90" y="785" width="8" height="70" fill="#9ea3ae" opacity=".75"/><rect x="112" y="785" width="8" height="70" fill="#9ea3ae" opacity=".75"/><rect x="134" y="785" width="8" height="70" fill="#9ea3ae" opacity=".75"/><rect x="156" y="785" width="8" height="70" fill="#9ea3ae" opacity=".75"/><rect x="178" y="785" width="8" height="70" fill="#9ea3ae" opacity=".75"/><rect x="200" y="785" width="8" height="70" fill="#9ea3ae" opacity=".75"/><rect x="222" y="785" width="8" height="70" fill="#9ea3ae" opacity=".75"/><rect x="244" y="785" width="8" height="70" fill="#9ea3ae" opacity=".75"/><rect x="266" y="785" width="8" height="70" fill="#9ea3ae" opacity=".75"/><rect x="288" y="785" width="8" height="70" fill="#9ea3ae" opacity=".75"/><rect x="310" y="785" width="8" height="70" fill="#9ea3ae" opacity=".75"/><rect x="332" y="785" width="8" height="70" fill="#9ea3ae" opacity=".75"/><rect x="354" y="785" width="8" height="70" fill="#9ea3ae" opacity=".75"/><rect x="376" y="785" width="8" height="70" fill="#9ea3ae" opacity=".75"/><rect x="398" y="785" width="8" height="70" fill="#9ea3ae" opacity=".75"/><rect x="420" y="785" width="8" height="70" fill="#9ea3ae" opacity=".75"/><rect x="442" y="785" width="8" height="70" fill="#9ea3ae" opacity=".75"/><rect x="464" y="785" width="8" height="70" fill="#9ea3ae" opacity=".75"/><rect x="486" y="785" width="8" height="70" fill="#9ea3ae" opacity=".75"/><rect x="508" y="785" width="8" height="70" fill="#9ea3ae" opacity=".75"/><rect x="530" y="785" width="8" height="70" fill="#9ea3ae" opacity=".75"/><rect x="552" y="785" width="8" height="70" fill="#9ea3ae" opacity=".75"/><rect x="574" y="785" width="8" height="70" fill="#9ea3ae" opacity=".75"/><rect x="596" y="785" width="8" height="70" fill="#9ea3ae" opacity=".75"/><rect x="618" y="785" width="8" height="70" fill="#9ea3ae" opacity=".75"/><polygon points="500,780 670,775 670,812 500,830" fill="#bcc4d3" /><polygon points="340,862 670,815 670,960 340,960" fill="#7f7f7f" /><polygon points="340,882 670,840 670,856 340,898" fill="#dedede" /><rect x="150" y="810" width="140" height="110" fill="#1d1d1b" /><rect x="118" y="812" width="34" height="100" fill="#6e6048" /><path d="M165,830h110M165,850h110M165,870h110" stroke="#4a4a4a" stroke-width="4"/><rect x="212" y="812" width="5" height="100" fill="#8a7a40" /><rect x="290" y="820" width="50" height="90" fill="#b9bdc6" /></g></svg></div><div class="c t" style="left:689.6px;letter-spacing:-0.163px">INDUSTRIAL BUILDINGS AN…</div><div class="c l" style="left:945.0px;letter-spacing:0.386px">with-railway-spur</div><div class="c l" style="left:1149.3px;letter-spacing:-0.11px">mexico</div><div class="c l" style="left:1340.8px;letter-spacing:0.18px">queretaro</div><div class="c l" style="left:1532.4px;letter-spacing:0.194px">airport-area</div><div class="btn" style="left:1927.2px">Add</div></div>
<div class="row hov" style="top:471.32px"><div class="hc" style="left:0;width:63.8px"><svg class="cb" style="" width="30.65" height="30.65" viewBox="0 0 24 24"><path d="M19 5v14H5V5h14m0-2H5c-1.1 0-2 .9-2 2v14c0 1.1.9 2 2 2h14c1.1 0 2-.9 2-2V5c0-1.1-.9-2-2-2z"/></svg></div><div class="c " style="left:76.6px;letter-spacing:0.137px">65517fb5…</div><div class="c " style="left:191.5px">507</div><div class="av" style="left:434.2px"><svg width="127.7" height="127.7" viewBox="0 0 128 128"><g transform="translate(-7.37,30.97) scale(0.1100)"><rect x="0" y="-300" width="1400" height="1200" fill="#c6c6c6" /><rect x="0" y="-300" width="1400" height="380" fill="#34352f" /><rect x="770" y="20" width="60" height="30" fill="#b9b9b9" opacity=".7"/><rect x="880" y="20" width="120" height="30" fill="#b9b9b9" opacity=".7"/><rect x="1030" y="20" width="90" height="30" fill="#b9b9b9" opacity=".7"/><rect x="1130" y="20" width="60" height="30" fill="#b9b9b9" opacity=".7"/><polygon points="0,80 1400,60 1400,190 0,170" fill="#6a6f46" /><polygon points="840,70 1400,60 1400,150 1000,150" fill="#8f8468" /><ellipse cx="150" cy="150" rx="38" ry="22" fill="#2c2f28"/><ellipse cx="520" cy="130" rx="28" ry="18" fill="#2c2f28"/><ellipse cx="340" cy="100" rx="18" ry="12" fill="#2c2f28"/><ellipse cx="210" cy="105" rx="14" ry="10" fill="#2c2f28"/><ellipse cx="740" cy="95" rx="36" ry="22" fill="#2c2f28"/><ellipse cx="945" cy="95" rx="52" ry="42" fill="#2c2f28"/><ellipse cx="1095" cy="100" rx="36" ry="24" fill="#2c2f28"/><ellipse cx="500" cy="90" rx="40" ry="12" fill="#2c2f28"/><ellipse cx="620" cy="75" rx="60" ry="14" fill="#2c2f28"/><ellipse cx="860" cy="125" rx="30" ry="16" fill="#2c2f28"/><polygon points="40,185 600,148 1260,196 1260,222 935,238 560,272 170,322 40,312" fill="#d6d6d6" /><polygon points="40,185 600,148 1260,196 1260,205 600,170 40,215" fill="#dedede" /><polygon points="40,312 170,322 170,640 40,640" fill="#b2b2b2" /><polygon points="150,322 560,272 575,640 160,640" fill="#bdbbb8" /><polygon points="225,398 560,356 576,640 232,640" fill="#9b9997" /><polygon points="285,442 525,402 532,600 292,640" fill="#29292b" /><polygon points="562,272 900,236 900,402 576,446" fill="#b7b5b2" /><polygon points="580,414 900,356 900,440 586,494" fill="#a6a8af" /><polygon points="610,407 618,405 618,483 610,485" fill="#c9c9c9" /><polygon points="658,398 666,396 666,475 658,477" fill="#c9c9c9" /><polygon points="706,389 714,387 714,467 706,469" fill="#c9c9c9" /><polygon points="754,381 762,379 762,458 754,460" fill="#c9c9c9" /><polygon points="802,372 810,370 810,450 802,452" fill="#c9c9c9" /><polygon points="850,363 858,361 858,442 850,444" fill="#c9c9c9" /><polygon points="898,355 906,353 906,434 898,436" fill="#c9c9c9" /><polygon points="900,236 936,234 936,442 900,444" fill="#e2e2e2" /><polygon points="936,236 1260,198 1260,384 960,442" fill="#c9c7c5" /><polygon points="975,292 1152,270 1152,402 975,442" fill="#8e8c8a" /><polygon points="1010,318 1122,306 1130,396 1010,412" fill="#2b2b2d" /><polygon points="1160,310 1260,296 1260,380 1160,396" fill="#a9a9ac" /><polygon points="576,500 1260,392 1260,490 640,640 576,640" fill="#cbcbcb" /><polygon points="576,470 935,425 960,450 640,520" fill="#7d7b78" opacity=".7"/><polygon points="800,604 1260,476 1260,640 800,640" fill="#474747" /></g></svg></div><div class="c t" style="left:689.6px;letter-spacing:-0.578px">PREVENTA DE BODEGAS Y N…</div><div class="c l" style="left:945.0px;letter-spacing:0.091px">preventa</div><div class="c l" style="left:1149.3px;letter-spacing:-0.11px">mexico</div><div class="c l" style="left:1340.8px;letter-spacing:0.18px">queretaro</div><div class="c l" style="left:1532.4px;letter-spacing:-0.055px">zona-sur</div><div class="btn" style="left:1927.2px">Add</div></div>
<div class="row" style="top:537.73px"><div class="hc" style="left:0;width:63.8px"><svg class="cb" style="" width="30.65" height="30.65" viewBox="0 0 24 24"><path d="M19 5v14H5V5h14m0-2H5c-1.1 0-2 .9-2 2v14c0 1.1.9 2 2 2h14c1.1 0 2-.9 2-2V5c0-1.1-.9-2-2-2z"/></svg></div><div class="c " style="left:76.6px;letter-spacing:-0.025px">6551863…</div><div class="c " style="left:191.5px">508</div><div class="av" style="left:434.2px"><svg width="127.7" height="127.7" viewBox="0 0 128 128"><g transform="translate(-7.37,30.97) scale(0.1100)"><rect x="0" y="-300" width="1400" height="1200" fill="#c6c6c6" /><rect x="0" y="-300" width="1400" height="380" fill="#34352f" /><rect x="770" y="20" width="60" height="30" fill="#b9b9b9" opacity=".7"/><rect x="880" y="20" width="120" height="30" fill="#b9b9b9" opacity=".7"/><rect x="1030" y="20" width="90" height="30" fill="#b9b9b9" opacity=".7"/><rect x="1130" y="20" width="60" height="30" fill="#b9b9b9" opacity=".7"/><polygon points="0,80 1400,60 1400,190 0,170" fill="#6a6f46" /><polygon points="840,70 1400,60 1400,150 1000,150" fill="#8f8468" /><ellipse cx="150" cy="150" rx="38" ry="22" fill="#2c2f28"/><ellipse cx="520" cy="130" rx="28" ry="18" fill="#2c2f28"/><ellipse cx="340" cy="100" rx="18" ry="12" fill="#2c2f28"/><ellipse cx="210" cy="105" rx="14" ry="10" fill="#2c2f28"/><ellipse cx="740" cy="95" rx="36" ry="22" fill="#2c2f28"/><ellipse cx="945" cy="95" rx="52" ry="42" fill="#2c2f28"/><ellipse cx="1095" cy="100" rx="36" ry="24" fill="#2c2f28"/><ellipse cx="500" cy="90" rx="40" ry="12" fill="#2c2f28"/><ellipse cx="620" cy="75" rx="60" ry="14" fill="#2c2f28"/><ellipse cx="860" cy="125" rx="30" ry="16" fill="#2c2f28"/><polygon points="40,185 600,148 1260,196 1260,222 935,238 560,272 170,322 40,312" fill="#d6d6d6" /><polygon points="40,185 600,148 1260,196 1260,205 600,170 40,215" fill="#dedede" /><polygon points="40,312 170,322 170,640 40,640" fill="#b2b2b2" /><polygon points="150,322 560,272 575,640 160,640" fill="#bdbbb8" /><polygon points="225,398 560,356 576,640 232,640" fill="#9b9997" /><polygon points="285,442 525,402 532,600 292,640" fill="#29292b" /><polygon points="562,272 900,236 900,402 576,446" fill="#b7b5b2" /><polygon points="580,414 900,356 900,440 586,494" fill="#a6a8af" /><polygon points="610,407 618,405 618,483 610,485" fill="#c9c9c9" /><polygon points="658,398 666,396 666,475 658,477" fill="#c9c9c9" /><polygon points="706,389 714,387 714,467 706,469" fill="#c9c9c9" /><polygon points="754,381 762,379 762,458 754,460" fill="#c9c9c9" /><polygon points="802,372 810,370 810,450 802,452" fill="#c9c9c9" /><polygon points="850,363 858,361 858,442 850,444" fill="#c9c9c9" /><polygon points="898,355 906,353 906,434 898,436" fill="#c9c9c9" /><polygon points="900,236 936,234 936,442 900,444" fill="#e2e2e2" /><polygon points="936,236 1260,198 1260,384 960,442" fill="#c9c7c5" /><polygon points="975,292 1152,270 1152,402 975,442" fill="#8e8c8a" /><polygon points="1010,318 1122,306 1130,396 1010,412" fill="#2b2b2d" /><polygon points="1160,310 1260,296 1260,380 1160,396" fill="#a9a9ac" /><polygon points="576,500 1260,392 1260,490 640,640 576,640" fill="#cbcbcb" /><polygon points="576,470 935,425 960,450 640,520" fill="#7d7b78" opacity=".7"/><polygon points="800,604 1260,476 1260,640 800,640" fill="#474747" /></g></svg></div><div class="c t" style="left:689.6px;letter-spacing:-0.33px">PRESALE INDUSTRIAL BUIL…</div><div class="c l" style="left:945.0px;letter-spacing:-0.124px">presale</div><div class="c l" style="left:1149.3px;letter-spacing:-0.11px">mexico</div><div class="c l" style="left:1340.8px;letter-spacing:0.18px">queretaro</div><div class="c l" style="left:1532.4px;letter-spacing:0.082px">south-area</div><div class="btn" style="left:1927.2px">Add</div></div>
<div class="row" style="top:604.13px"><div class="hc" style="left:0;width:63.8px"><svg class="cb" style="" width="30.65" height="30.65" viewBox="0 0 24 24"><path d="M19 5v14H5V5h14m0-2H5c-1.1 0-2 .9-2 2v14c0 1.1.9 2 2 2h14c1.1 0 2-.9 2-2V5c0-1.1-.9-2-2-2z"/></svg></div><div class="c " style="left:76.6px;letter-spacing:0.128px">655211fa…</div><div class="c " style="left:191.5px">509</div><div class="av" style="left:434.2px"><svg width="127.7" height="127.7" viewBox="0 0 128 128"><g transform="translate(-7.37,31.19) scale(0.1100)"><rect x="0" y="-300" width="1400" height="1200" fill="#f6f6f6" /><path d="M40,75L640,700" stroke="#bdbcb9" stroke-width="150" fill="none" /><path d="M420,-40L1080,470" stroke="#bdbcb9" stroke-width="150" fill="none" /><path d="M1010,-40L330,400" stroke="#c2c1be" stroke-width="110" fill="none" /><path d="M960,-40L1300,230" stroke="#bdbcb9" stroke-width="90" fill="none" /><path d="M40,75L640,700" stroke="#f0f0f0" stroke-width="150" fill="none" stroke-dasharray="22 26"/><path d="M420,-40L1080,470" stroke="#f0f0f0" stroke-width="150" fill="none" stroke-dasharray="22 26"/><path d="M1010,-40L330,400" stroke="#efefef" stroke-width="110" fill="none" stroke-dasharray="18 22"/><path d="M40,75L640,700" stroke="#6b6863" stroke-width="78" fill="none" /><path d="M420,-40L1040,440" stroke="#6b6863" stroke-width="72" fill="none" /><path d="M990,-30L350,385" stroke="#6b6863" stroke-width="46" fill="none" /><path d="M1000,-40L1240,150" stroke="#8a8782" stroke-width="34" fill="none" /><path d="M990,-62L350,353" stroke="#222" stroke-width="12" fill="none" /><path d="M300,400L110,500" stroke="#6b6863" stroke-width="60" fill="none" /><polygon points="780,604 1260,326 1260,700 780,700" fill="#7e7361" /><polygon points="40,430 240,620 40,640" fill="#857a68" /><path d="M1260,282L1105,382" stroke="#111" stroke-width="16" fill="none" /><path d="M985,472L770,594" stroke="#111" stroke-width="16" fill="none" /><ellipse cx="1095" cy="445" rx="38" ry="20" fill="#3a3a36"/></g></svg></div><div class="c t" style="left:689.6px;letter-spacing:-0.553px">RENTA DE BODEGAS Y NAVE…</div><div class="c l" style="left:945.0px;letter-spacing:0.093px">con-amenidades</div><div class="c l" style="left:1149.3px;letter-spacing:-0.11px">mexico</div><div class="c l" style="left:1340.8px;letter-spacing:0.18px">queretaro</div><div class="c l" style="left:1532.4px;letter-spacing:-0.055px">zona-sur</div><div class="btn" style="left:1927.2px">Add</div></div>
<div class="row" style="top:670.54px"><div class="hc" style="left:0;width:63.8px"><svg class="cb" style="" width="30.65" height="30.65" viewBox="0 0 24 24"><path d="M19 5v14H5V5h14m0-2H5c-1.1 0-2 .9-2 2v14c0 1.1.9 2 2 2h14c1.1 0 2-.9 2-2V5c0-1.1-.9-2-2-2z"/></svg></div><div class="c " style="left:76.6px;letter-spacing:-0.05px">6552159…</div><div class="c " style="left:191.5px">510</div><div class="av" style="left:434.2px"><svg width="127.7" height="127.7" viewBox="0 0 128 128"><g transform="translate(-7.37,31.19) scale(0.1100)"><rect x="0" y="-300" width="1400" height="1200" fill="#f6f6f6" /><path d="M40,75L640,700" stroke="#bdbcb9" stroke-width="150" fill="none" /><path d="M420,-40L1080,470" stroke="#bdbcb9" stroke-width="150" fill="none" /><path d="M1010,-40L330,400" stroke="#c2c1be" stroke-width="110" fill="none" /><path d="M960,-40L1300,230" stroke="#bdbcb9" stroke-width="90" fill="none" /><path d="M40,75L640,700" stroke="#f0f0f0" stroke-width="150" fill="none" stroke-dasharray="22 26"/><path d="M420,-40L1080,470" stroke="#f0f0f0" stroke-width="150" fill="none" stroke-dasharray="22 26"/><path d="M1010,-40L330,400" stroke="#efefef" stroke-width="110" fill="none" stroke-dasharray="18 22"/><path d="M40,75L640,700" stroke="#6b6863" stroke-width="78" fill="none" /><path d="M420,-40L1040,440" stroke="#6b6863" stroke-width="72" fill="none" /><path d="M990,-30L350,385" stroke="#6b6863" stroke-width="46" fill="none" /><path d="M1000,-40L1240,150" stroke="#8a8782" stroke-width="34" fill="none" /><path d="M990,-62L350,353" stroke="#222" stroke-width="12" fill="none" /><path d="M300,400L110,500" stroke="#6b6863" stroke-width="60" fill="none" /><polygon points="780,604 1260,326 1260,700 780,700" fill="#7e7361" /><polygon points="40,430 240,620 40,640" fill="#857a68" /><path d="M1260,282L1105,382" stroke="#111" stroke-width="16" fill="none" /><path d="M985,472L770,594" stroke="#111" stroke-width="16" fill="none" /><ellipse cx="1095" cy="445" rx="38" ry="20" fill="#3a3a36"/></g></svg></div><div class="c t" style="left:689.6px;letter-spacing:-0.246px">LEASE INDUSTRIAL BUILDIN…</div><div class="c l" style="left:945.0px;letter-spacing:0.425px">with-amenities</div><div class="c l" style="left:1149.3px;letter-spacing:-0.11px">mexico</div><div class="c l" style="left:1340.8px;letter-spacing:0.18px">queretaro</div><div class="c l" style="left:1532.4px;letter-spacing:0.082px">south-area</div><div class="btn" style="left:1927.2px">Add</div></div>
<div class="row" style="top:736.94px"><div class="hc" style="left:0;width:63.8px"><svg class="cb" style="" width="30.65" height="30.65" viewBox="0 0 24 24"><path d="M19 5v14H5V5h14m0-2H5c-1.1 0-2 .9-2 2v14c0 1.1.9 2 2 2h14c1.1 0 2-.9 2-2V5c0-1.1-.9-2-2-2z"/></svg></div><div class="c " style="left:76.6px;letter-spacing:0.062px">65521d5…</div><div class="c " style="left:191.5px">511</div><div class="av" style="left:434.2px"><svg width="127.7" height="127.7" viewBox="0 0 128 128"><g transform="translate(-7.37,31.30) scale(0.1100)"><rect x="0" y="-300" width="1400" height="1200" fill="#ededed" /><rect x="0" y="-300" width="900" height="455" fill="#c2c2c2" /><path d="M60,-10q200,8 420,0t420,10" stroke="#dcdcdc" stroke-width="6" fill="none" opacity=".8"/><path d="M60,6q200,12 420,6t420,10" stroke="#dcdcdc" stroke-width="6" fill="none" opacity=".8"/><path d="M60,22q200,16 420,0t420,10" stroke="#dcdcdc" stroke-width="6" fill="none" opacity=".8"/><path d="M60,38q200,8 420,6t420,10" stroke="#dcdcdc" stroke-width="6" fill="none" opacity=".8"/><path d="M60,54q200,12 420,0t420,10" stroke="#dcdcdc" stroke-width="6" fill="none" opacity=".8"/><path d="M60,70q200,16 420,6t420,10" stroke="#dcdcdc" stroke-width="6" fill="none" opacity=".8"/><path d="M60,86q200,8 420,0t420,10" stroke="#dcdcdc" stroke-width="6" fill="none" opacity=".8"/><path d="M60,102q200,12 420,6t420,10" stroke="#dcdcdc" stroke-width="6" fill="none" opacity=".8"/><path d="M60,118q200,16 420,0t420,10" stroke="#dcdcdc" stroke-width="6" fill="none" opacity=".8"/><path d="M60,134q200,8 420,6t420,10" stroke="#dcdcdc" stroke-width="6" fill="none" opacity=".8"/><polygon points="86,94 392,120 376,186 78,166" fill="#2e2e2e" /><polygon points="84,140 388,162 376,186 78,166" fill="#4a4a4a" /><rect x="40" y="186" width="282" height="460" fill="#e3e3e3" /><path d="M40,200q70,-10 140,2t142,-2" stroke="#9c9c9c" stroke-width="9" fill="none"/><path d="M40,224q70,8 140,0t142,4" stroke="#c4c4c4" stroke-width="5" fill="none"/><path d="M40,250q70,-10 140,2t142,-2" stroke="#9c9c9c" stroke-width="9" fill="none"/><path d="M40,274q70,8 140,0t142,4" stroke="#c4c4c4" stroke-width="5" fill="none"/><path d="M40,300q70,-10 140,2t142,-2" stroke="#9c9c9c" stroke-width="9" fill="none"/><path d="M40,324q70,8 140,0t142,4" stroke="#c4c4c4" stroke-width="5" fill="none"/><path d="M40,350q70,-10 140,2t142,-2" stroke="#9c9c9c" stroke-width="9" fill="none"/><path d="M40,374q70,8 140,0t142,4" stroke="#c4c4c4" stroke-width="5" fill="none"/><path d="M40,400q70,-10 140,2t142,-2" stroke="#9c9c9c" stroke-width="9" fill="none"/><path d="M40,424q70,8 140,0t142,4" stroke="#c4c4c4" stroke-width="5" fill="none"/><path d="M40,450q70,-10 140,2t142,-2" stroke="#9c9c9c" stroke-width="9" fill="none"/><path d="M40,474q70,8 140,0t142,4" stroke="#c4c4c4" stroke-width="5" fill="none"/><path d="M40,500q70,-10 140,2t142,-2" stroke="#9c9c9c" stroke-width="9" fill="none"/><path d="M40,524q70,8 140,0t142,4" stroke="#c4c4c4" stroke-width="5" fill="none"/><path d="M40,550q70,-10 140,2t142,-2" stroke="#9c9c9c" stroke-width="9" fill="none"/><path d="M40,574q70,8 140,0t142,4" stroke="#c4c4c4" stroke-width="5" fill="none"/><path d="M40,600q70,-10 140,2t142,-2" stroke="#9c9c9c" stroke-width="9" fill="none"/><path d="M40,624q70,8 140,0t142,4" stroke="#c4c4c4" stroke-width="5" fill="none"/><rect x="318" y="190" width="14" height="450" fill="#6a6a6a" /><rect x="332" y="130" width="100" height="510" fill="#cdcdcd" /><rect x="430" y="130" width="22" height="510" fill="#474747" /><rect x="452" y="130" width="20" height="510" fill="#b4b4b4" /><polygon points="470,128 900,160 900,640 470,640" fill="#f4f4f4" /><rect x="506" y="168" width="310" height="414" fill="#2b2b2b" /><rect x="506" y="168" width="90" height="414" fill="#333536" /><rect x="816" y="192" width="86" height="448" fill="#4e4e4e" /><path d="M598,168V640M716,168V580M506,450H816M600,268H716" stroke="#767676" stroke-width="7" fill="none"/><rect x="880" y="10" width="56" height="150" fill="#535960" /><rect x="900" y="160" width="50" height="480" fill="#8c8c8c" /><rect x="740" y="-6" width="150" height="12" fill="#a5e2cc" /><rect x="1008" y="398" width="145" height="105" fill="#2f2f2f" /><ellipse cx="1110" cy="200" rx="110" ry="200" fill="#6c6e42" opacity=".88"/><ellipse cx="1060" cy="110" rx="60" ry="90" fill="#8f7d68" opacity=".88"/><ellipse cx="1160" cy="120" rx="60" ry="110" fill="#5d6139" opacity=".88"/><ellipse cx="1050" cy="300" rx="60" ry="90" fill="#595d38" opacity=".88"/><ellipse cx="1180" cy="300" rx="45" ry="100" fill="#8a7a64" opacity=".88"/><ellipse cx="1110" cy="60" rx="60" ry="60" fill="#77794a" opacity=".88"/><ellipse cx="1120" cy="360" rx="80" ry="50" fill="#3a3d2c" opacity=".88"/><rect x="1096" y="400" width="9" height="190" fill="#8a7355" /><rect x="870" y="568" width="400" height="22" fill="#a0927a" /></g></svg></div><div class="c t" style="left:689.6px;letter-spacing:-0.578px">PREVENTA DE BODEGAS Y N…</div><div class="c l" style="left:945.0px;letter-spacing:0.091px">preventa</div><div class="c l" style="left:1149.3px;letter-spacing:-0.11px">mexico</div><div class="c l" style="left:1340.8px;letter-spacing:0.18px">queretaro</div><div class="c l" style="left:1532.4px;letter-spacing:0.152px">zona-norte</div><div class="btn" style="left:1927.2px">Add</div></div>
<div class="row" style="top:803.34px"><div class="hc" style="left:0;width:63.8px"><svg class="cb" style="" width="30.65" height="30.65" viewBox="0 0 24 24"><path d="M19 5v14H5V5h14m0-2H5c-1.1 0-2 .9-2 2v14c0 1.1.9 2 2 2h14c1.1 0 2-.9 2-2V5c0-1.1-.9-2-2-2z"/></svg></div><div class="c " style="left:76.6px;letter-spacing:0.082px">65521fad…</div><div class="c " style="left:191.5px">512</div><div class="av" style="left:434.2px"><svg width="127.7" height="127.7" viewBox="0 0 128 128"><g transform="translate(-7.37,31.30) scale(0.1100)"><rect x="0" y="-300" width="1400" height="1200" fill="#ededed" /><rect x="0" y="-300" width="900" height="455" fill="#c2c2c2" /><path d="M60,-10q200,8 420,0t420,10" stroke="#dcdcdc" stroke-width="6" fill="none" opacity=".8"/><path d="M60,6q200,12 420,6t420,10" stroke="#dcdcdc" stroke-width="6" fill="none" opacity=".8"/><path d="M60,22q200,16 420,0t420,10" stroke="#dcdcdc" stroke-width="6" fill="none" opacity=".8"/><path d="M60,38q200,8 420,6t420,10" stroke="#dcdcdc" stroke-width="6" fill="none" opacity=".8"/><path d="M60,54q200,12 420,0t420,10" stroke="#dcdcdc" stroke-width="6" fill="none" opacity=".8"/><path d="M60,70q200,16 420,6t420,10" stroke="#dcdcdc" stroke-width="6" fill="none" opacity=".8"/><path d="M60,86q200,8 420,0t420,10" stroke="#dcdcdc" stroke-width="6" fill="none" opacity=".8"/><path d="M60,102q200,12 420,6t420,10" stroke="#dcdcdc" stroke-width="6" fill="none" opacity=".8"/><path d="M60,118q200,16 420,0t420,10" stroke="#dcdcdc" stroke-width="6" fill="none" opacity=".8"/><path d="M60,134q200,8 420,6t420,10" stroke="#dcdcdc" stroke-width="6" fill="none" opacity=".8"/><polygon points="86,94 392,120 376,186 78,166" fill="#2e2e2e" /><polygon points="84,140 388,162 376,186 78,166" fill="#4a4a4a" /><rect x="40" y="186" width="282" height="460" fill="#e3e3e3" /><path d="M40,200q70,-10 140,2t142,-2" stroke="#9c9c9c" stroke-width="9" fill="none"/><path d="M40,224q70,8 140,0t142,4" stroke="#c4c4c4" stroke-width="5" fill="none"/><path d="M40,250q70,-10 140,2t142,-2" stroke="#9c9c9c" stroke-width="9" fill="none"/><path d="M40,274q70,8 140,0t142,4" stroke="#c4c4c4" stroke-width="5" fill="none"/><path d="M40,300q70,-10 140,2t142,-2" stroke="#9c9c9c" stroke-width="9" fill="none"/><path d="M40,324q70,8 140,0t142,4" stroke="#c4c4c4" stroke-width="5" fill="none"/><path d="M40,350q70,-10 140,2t142,-2" stroke="#9c9c9c" stroke-width="9" fill="none"/><path d="M40,374q70,8 140,0t142,4" stroke="#c4c4c4" stroke-width="5" fill="none"/><path d="M40,400q70,-10 140,2t142,-2" stroke="#9c9c9c" stroke-width="9" fill="none"/><path d="M40,424q70,8 140,0t142,4" stroke="#c4c4c4" stroke-width="5" fill="none"/><path d="M40,450q70,-10 140,2t142,-2" stroke="#9c9c9c" stroke-width="9" fill="none"/><path d="M40,474q70,8 140,0t142,4" stroke="#c4c4c4" stroke-width="5" fill="none"/><path d="M40,500q70,-10 140,2t142,-2" stroke="#9c9c9c" stroke-width="9" fill="none"/><path d="M40,524q70,8 140,0t142,4" stroke="#c4c4c4" stroke-width="5" fill="none"/><path d="M40,550q70,-10 140,2t142,-2" stroke="#9c9c9c" stroke-width="9" fill="none"/><path d="M40,574q70,8 140,0t142,4" stroke="#c4c4c4" stroke-width="5" fill="none"/><path d="M40,600q70,-10 140,2t142,-2" stroke="#9c9c9c" stroke-width="9" fill="none"/><path d="M40,624q70,8 140,0t142,4" stroke="#c4c4c4" stroke-width="5" fill="none"/><rect x="318" y="190" width="14" height="450" fill="#6a6a6a" /><rect x="332" y="130" width="100" height="510" fill="#cdcdcd" /><rect x="430" y="130" width="22" height="510" fill="#474747" /><rect x="452" y="130" width="20" height="510" fill="#b4b4b4" /><polygon points="470,128 900,160 900,640 470,640" fill="#f4f4f4" /><rect x="506" y="168" width="310" height="414" fill="#2b2b2b" /><rect x="506" y="168" width="90" height="414" fill="#333536" /><rect x="816" y="192" width="86" height="448" fill="#4e4e4e" /><path d="M598,168V640M716,168V580M506,450H816M600,268H716" stroke="#767676" stroke-width="7" fill="none"/><rect x="880" y="10" width="56" height="150" fill="#535960" /><rect x="900" y="160" width="50" height="480" fill="#8c8c8c" /><rect x="740" y="-6" width="150" height="12" fill="#a5e2cc" /><rect x="1008" y="398" width="145" height="105" fill="#2f2f2f" /><ellipse cx="1110" cy="200" rx="110" ry="200" fill="#6c6e42" opacity=".88"/><ellipse cx="1060" cy="110" rx="60" ry="90" fill="#8f7d68" opacity=".88"/><ellipse cx="1160" cy="120" rx="60" ry="110" fill="#5d6139" opacity=".88"/><ellipse cx="1050" cy="300" rx="60" ry="90" fill="#595d38" opacity=".88"/><ellipse cx="1180" cy="300" rx="45" ry="100" fill="#8a7a64" opacity=".88"/><ellipse cx="1110" cy="60" rx="60" ry="60" fill="#77794a" opacity=".88"/><ellipse cx="1120" cy="360" rx="80" ry="50" fill="#3a3d2c" opacity=".88"/><rect x="1096" y="400" width="9" height="190" fill="#8a7355" /><rect x="870" y="568" width="400" height="22" fill="#a0927a" /></g></svg></div><div class="c t" style="left:689.6px;letter-spacing:-0.33px">PRESALE INDUSTRIAL BUIL…</div><div class="c l" style="left:945.0px;letter-spacing:-0.124px">presale</div><div class="c l" style="left:1149.3px;letter-spacing:-0.11px">mexico</div><div class="c l" style="left:1340.8px;letter-spacing:0.18px">queretaro</div><div class="c l" style="left:1532.4px;letter-spacing:0.206px">north-area</div><div class="btn" style="left:1927.2px">Add</div></div>
<div class="row" style="top:869.75px"><div class="hc" style="left:0;width:63.8px"><svg class="cb" style="" width="30.65" height="30.65" viewBox="0 0 24 24"><path d="M19 5v14H5V5h14m0-2H5c-1.1 0-2 .9-2 2v14c0 1.1.9 2 2 2h14c1.1 0 2-.9 2-2V5c0-1.1-.9-2-2-2z"/></svg></div><div class="c " style="left:76.6px">65522…</div><div class="c " style="left:191.5px">513</div><div class="av" style="left:434.2px"><svg width="127.7" height="127.7" viewBox="0 0 128 128"><g transform="translate(-7.37,31.63) scale(0.1100)"><rect x="0" y="-300" width="1400" height="560" fill="#a59a88" /><rect x="310" y="-300" width="122" height="545" fill="url(#g-col)" /><rect x="430" y="48" width="172" height="196" fill="#f3f4f1" /><path d="M440,90h150M440,130h150M440,170h150M440,205h150" stroke="#d3ebe1" stroke-width="6"/><rect x="610" y="40" width="162" height="210" fill="#a4967f" /><rect x="770" y="120" width="130" height="135" fill="#9b948a" /><rect x="610" y="10" width="70" height="34" fill="#94866f" /><rect x="920" y="-300" width="70" height="440" fill="#b9b5ad" opacity=".6"/><polygon points="40,112 330,140 330,252 40,326" fill="#494944" /><polygon points="900,166 1260,138 1260,342 900,256" fill="#494944" /><rect x="136" y="120" width="9" height="180" fill="#9f8b69" /><rect x="1148" y="150" width="9" height="160" fill="#9f8b69" /><polygon points="40,322 330,248 900,252 1260,338 1260,700 40,700" fill="url(#g-fl)" /><polygon points="40,312 330,244 330,254 40,330" fill="#5b6440" /><polygon points="900,250 1260,330 1260,346 900,258" fill="#5b6440" /></g></svg></div><div class="c t" style="left:689.6px;letter-spacing:-0.553px">RENTA DE BODEGAS Y NAVE…</div><div class="c l" style="left:945.0px;letter-spacing:0.093px">con-amenidades</div><div class="c l" style="left:1149.3px;letter-spacing:-0.11px">mexico</div><div class="c l" style="left:1340.8px;letter-spacing:0.18px">queretaro</div><div class="c l" style="left:1532.4px;letter-spacing:0.152px">zona-norte</div><div class="btn" style="left:1927.2px">Add</div></div>
<div class="row" style="top:936.15px"><div class="hc" style="left:0;width:63.8px"><svg class="cb" style="" width="30.65" height="30.65" viewBox="0 0 24 24"><path d="M19 5v14H5V5h14m0-2H5c-1.1 0-2 .9-2 2v14c0 1.1.9 2 2 2h14c1.1 0 2-.9 2-2V5c0-1.1-.9-2-2-2z"/></svg></div><div class="c " style="left:76.6px">65522…</div><div class="c " style="left:191.5px">514</div><div class="av" style="left:434.2px"><svg width="127.7" height="127.7" viewBox="0 0 128 128"><g transform="translate(-7.37,31.63) scale(0.1100)"><rect x="0" y="-300" width="1400" height="560" fill="#a59a88" /><rect x="310" y="-300" width="122" height="545" fill="url(#g-col)" /><rect x="430" y="48" width="172" height="196" fill="#f3f4f1" /><path d="M440,90h150M440,130h150M440,170h150M440,205h150" stroke="#d3ebe1" stroke-width="6"/><rect x="610" y="40" width="162" height="210" fill="#a4967f" /><rect x="770" y="120" width="130" height="135" fill="#9b948a" /><rect x="610" y="10" width="70" height="34" fill="#94866f" /><rect x="920" y="-300" width="70" height="440" fill="#b9b5ad" opacity=".6"/><polygon points="40,112 330,140 330,252 40,326" fill="#494944" /><polygon points="900,166 1260,138 1260,342 900,256" fill="#494944" /><rect x="136" y="120" width="9" height="180" fill="#9f8b69" /><rect x="1148" y="150" width="9" height="160" fill="#9f8b69" /><polygon points="40,322 330,248 900,252 1260,338 1260,700 40,700" fill="url(#g-fl)" /><polygon points="40,312 330,244 330,254 40,330" fill="#5b6440" /><polygon points="900,250 1260,330 1260,346 900,258" fill="#5b6440" /></g></svg></div><div class="c t" style="left:689.6px;letter-spacing:-0.246px">LEASE INDUSTRIAL BUILDIN…</div><div class="c l" style="left:945.0px;letter-spacing:0.425px">with-amenities</div><div class="c l" style="left:1149.3px;letter-spacing:-0.11px">mexico</div><div class="c l" style="left:1340.8px;letter-spacing:0.18px">queretaro</div><div class="c l" style="left:1532.4px;letter-spacing:0.206px">north-area</div><div class="btn" style="left:1927.2px">Add</div></div>
</div>
<div class="pag"><span>1-14 of 16</span>
<svg style="left:155px;fill:#bdbdbd" width="30.6" height="30.6" viewBox="0 0 24 24"><path d="M15.41 16.59L10.83 12l4.58-4.59L14 6l-6 6 6 6 1.41-1.41z"/></svg>
<svg style="left:216.4px;fill:#222" width="30.6" height="30.6" viewBox="0 0 24 24"><path d="M8.59 16.59L13.17 12 8.59 7.41 10 6l6 6-6 6-1.41-1.41z"/></svg>
</div>
<div class="fab">Add New</div>
</body></html>
